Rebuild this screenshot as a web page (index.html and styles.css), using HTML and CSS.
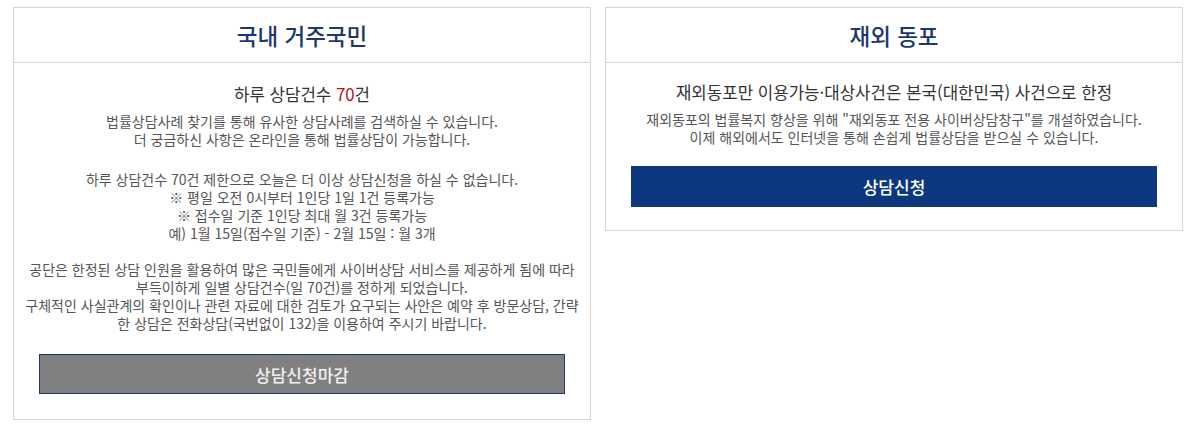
FILE: index.html
```html
<!DOCTYPE html>
<html lang="ko">

<head>
  <meta charset="UTF-8">
  <meta name="viewport" content="width=device-width, initial-scale=1.0">
  <title>사이버상담</title>
  <link rel="stylesheet" href="styles.css">
</head>

<body>
  <div class="wrap">
    <div class="card">
      <div class="card-head">
        <h2>국내 거주국민</h2>
      </div>
      <div class="card-body">
        <h3>하루 상담건수 <span class="red">70</span>건</h3>
        <p class="desc">법률상담사례 찾기를 통해 유사한 상담사례를 검색하실 수 있습니다.<br>더 궁금하신 사항은 온라인을 통해 법률상담이 가능합니다.</p>
        <p class="notice">하루 상담건수 70건 제한으로 오늘은 더 이상 상담신청을 하실 수 없습니다.<br>
          ※ 평일 오전 0시부터 1인당 1일 1건 등록가능<br>
          ※ 접수일 기준 1인당 최대 월 3건 등록가능<br>
          예) 1월 15일(접수일 기준) - 2월 15일 : 월 3개<br><br>
          공단은 한정된 상담 인원을 활용하여 많은 국민들에게 사이버상담 서비스를 제공하게 됨에 따라<br>
          부득이하게 일별 상담건수(일 70건)를 정하게 되었습니다.<br>
          구체적인 사실관계의 확인이나 관련 자료에 대한 검토가 요구되는 사안은 예약 후 방문상담, 간략한 상담은 전화상담(국번없이 132)을 이용하여 주시기 바랍니다.</p>
        <button class="btn btn-closed" type="button">상담신청마감</button>
      </div>
    </div>

    <div class="card">
      <div class="card-head">
        <h2>재외 동포</h2>
      </div>
      <div class="card-body card-body-sm">
        <h3>재외동포만 이용가능·대상사건은 본국(대한민국) 사건으로 한정</h3>
        <p class="desc">재외동포의 법률복지 향상을 위해 "재외동포 전용 사이버상담창구"를 개설하였습니다.<br>이제 해외에서도 인터넷을 통해 손쉽게 법률상담을 받으실 수 있습니다.</p>
        <button class="btn btn-apply" type="button">상담신청</button>
      </div>
    </div>
  </div>
</body>

</html>
```

FILE: styles.css
```css
body {
  margin: 0;
  padding: 7px 7px 0 13px;
  font-family: "Noto Sans CJK KR", "Noto Sans", sans-serif;
  color: #555;
  background-color: #fff;
}

.wrap {
  display: flex;
  align-items: flex-start;
  gap: 14px;
}

.card {
  width: 578px;
  box-sizing: border-box;
  border: 1px solid #d6d6d6;
  text-align: center;
}

.card-head {
  height: 55px;
  box-sizing: border-box;
  padding-bottom: 1px;
  display: flex;
  align-items: center;
  justify-content: center;
  border-bottom: 1px solid #d6d6d6;
}

.card-head h2 {
  margin: 0;
  font-size: 22.5px;
  font-weight: 500;
  color: #1d3770;
}

.card-body {
  padding: 19px 10px 25px;
}

.card-body-sm {
  padding-top: 17px;
  padding-bottom: 23px;
}

.card-body h3 {
  margin: 0;
  font-size: 16.8px;
  line-height: 24px;
  font-weight: 400;
  color: #333;
}

.red {
  color: #b5121b;
}

.desc,
.notice {
  margin: 6px 0 0;
  font-size: 14px;
  line-height: 18px;
}

.notice {
  margin-top: 22px;
}

.btn {
  display: block;
  width: calc(100% - 30px);
  margin: 22px 15px 0;
  height: 40px;
  font-family: inherit;
  font-size: 17px;
  font-weight: 500;
  color: #fff;
  border: none;
  cursor: pointer;
}

.btn-closed {
  background-color: #808080;
  border: 1px solid #1e3a64;
  color: #f0f0f0;
}

.btn-apply {
  height: 41px;
  margin-top: 20px;
  background-color: #0d3880;
}
```
